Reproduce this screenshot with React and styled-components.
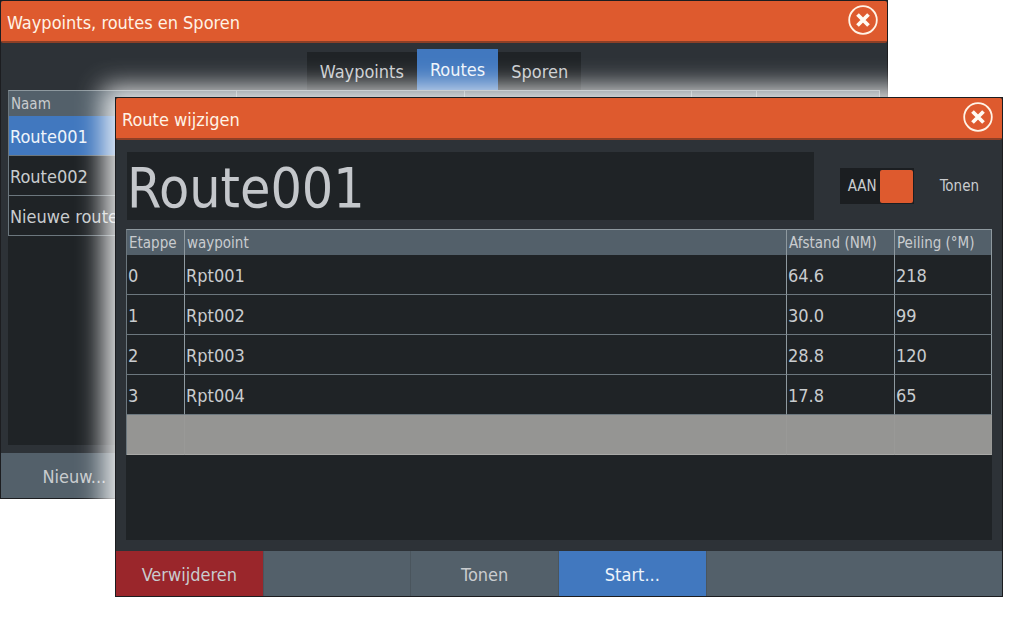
import { useState } from "react";
import styled, { createGlobalStyle } from "styled-components";

const GlobalStyle = createGlobalStyle`
  * {
    box-sizing: border-box;
  }
  body {
    margin: 0;
    background: #ffffff;
  }
  body, button, input, table {
    font-family: "DejaVu Sans Condensed", "DejaVu Sans", Tahoma, sans-serif;
  }
`;

const Desktop = styled.main`
  position: relative;
  min-height: 100vh;
  overflow: hidden;
`;

const Window = styled.section`
  position: absolute;
  display: flex;
  flex-direction: column;
  border: 1px solid #1c1d20;
  background: #2d3237;
  color: #c9cccf;
`;

const BackWindow = styled(Window)`
  top: 0;
  left: 0;
  right: 136px;
`;

const FrontWindow = styled(Window)`
  top: 97px;
  left: 115px;
  right: 21px;
  box-shadow: -2px 0 24px 10px rgba(255, 255, 255, 0.85);
`;

const TitleBar = styled.header`
  display: flex;
  align-items: center;
  justify-content: space-between;
  height: 42px;
  padding: 0 9px 2px 6px;
  border-bottom: 2px solid #8d3f26;
  border-radius: 2px;
  background: #de5a2e;
`;

const Title = styled.h1`
  margin: 0;
  padding-top: 5px;
  font-size: 18px;
  line-height: 24px;
  font-weight: 400;
  color: #fff3e6;
`;

const CloseButton = styled.button`
  display: flex;
  padding: 0;
  border: none;
  background: none;
  cursor: pointer;
`;

const Tabs = styled.nav`
  display: flex;
  justify-content: center;
  align-items: flex-end;
  height: 47px;
`;

const Tab = styled.button`
  height: ${({ $active }) => ($active ? 41 : 38)}px;
  padding: 0 13px;
  border: none;
  background: ${({ $active }) => ($active ? "#4178bf" : "#1f2326")};
  color: ${({ $active }) => ($active ? "#eef4fb" : "#c9cccf")};
  font-size: 18px;
  cursor: pointer;
`;

const Pane = styled.div`
  height: ${({ $height }) => $height}px;
  margin: 0 ${({ $side }) => $side}px;
  background: #1f2326;
`;

const Table = styled.table`
  width: 100%;
  table-layout: fixed;
  border-collapse: separate;
  border-spacing: 0;
  border-top: 1px solid #8e999f;
  border-left: 1px solid #6c777e;
  font-size: 18px;
  text-align: left;

  th {
    height: 25px;
    padding: 0 2px;
    border-right: 1px solid #8e999f;
    background: #53606a;
    font-size: 15px;
    font-weight: 400;
    white-space: nowrap;
  }

  td {
    height: 40px;
    padding: 1px 1px 0;
    border-right: 1px solid #8e999f;
    border-bottom: 1px solid #6c777e;
    white-space: nowrap;
  }
`;

const Row = styled.tr`
  background: ${({ $selected }) => ($selected ? "#4178bf" : "transparent")};
  color: ${({ $selected }) => ($selected ? "#eef4fb" : "inherit")};
`;

const EmptyRow = styled.tr`
  background: #959593;

  && td {
    border-right-color: #999997;
    border-bottom-color: #a9a9a7;
  }
`;

const Col = styled.col`
  width: ${({ $width }) => $width};
`;

const NameRow = styled.div`
  display: flex;
  align-items: center;
  gap: 26px;
  padding: 12px 23px 9px 11px;
`;

const NameInput = styled.input`
  flex: 1;
  min-width: 0;
  height: 68px;
  padding: 4px 0 0;
  border: none;
  outline: none;
  background: #1f2326;
  color: #c4c7cb;
  font-size: 55px;
`;

const Switch = styled.span`
  display: flex;
  align-items: center;
  gap: 3px;
  height: 36px;
  padding: 0 1px 0 8px;
  background: #1b1e21;
  font-size: 15px;
`;

const Knob = styled.input`
  appearance: none;
  width: 33px;
  height: 33px;
  margin: 0;
  border-radius: 2px;
  background: ${({ checked }) => (checked ? "#de5a2e" : "#53606a")};
  cursor: pointer;
`;

const SwitchLabel = styled.label`
  font-size: 15px;
`;

const ButtonBar = styled.footer`
  display: grid;
  grid-template-columns: repeat(6, 1fr);
  height: 45px;
  margin-top: ${({ $gap }) => $gap}px;
  background: #53606a;
`;

const colors = {
  danger: "#9a262b",
  primary: "#4178bf",
  plain: "#53606a",
};

const BarButton = styled.button`
  padding: 2px 0 0;
  border: none;
  border-right: 1px solid #4a555d;
  background: ${({ $kind }) => colors[$kind]};
  color: ${({ $kind }) => ($kind === "primary" ? "#eef4fb" : "#c9cccf")};
  font-size: 18px;
  cursor: pointer;
`;

const BarSlot = styled.span`
  border-right: 1px solid #4a555d;
`;

const Close = () => (
  <CloseButton aria-label="Sluiten">
    <svg width="30" height="30" viewBox="0 0 30 30" fill="none">
      <circle cx="15" cy="15" r="13.8" stroke="#fff3e6" strokeWidth="1.8" />
      <path d="M9.5 9.5 20.5 20.5M20.5 9.5 9.5 20.5" stroke="#fffaf2" strokeWidth="3.8" />
    </svg>
  </CloseButton>
);

const tabs = ["Waypoints", "Routes", "Sporen"];
const routes = ["Route001", "Route002", "Nieuwe route..."];
const legs = [
  { leg: 0, waypoint: "Rpt001", distance: "64.6", bearing: 218 },
  { leg: 1, waypoint: "Rpt002", distance: "30.0", bearing: 99 },
  { leg: 2, waypoint: "Rpt003", distance: "28.8", bearing: 120 },
  { leg: 3, waypoint: "Rpt004", distance: "17.8", bearing: 65 },
];

const RoutesWindow = () => {
  const [tab, setTab] = useState("Routes");

  return (
    <BackWindow>
      <TitleBar>
        <Title>Waypoints, routes en Sporen</Title>
        <Close />
      </TitleBar>
      <Tabs>
        {tabs.map((name) => (
          <Tab key={name} $active={name === tab} onClick={() => setTab(name)}>
            {name}
          </Tab>
        ))}
      </Tabs>
      <Pane $height={355} $side={7}>
        <Table>
          <colgroup>
            <Col $width="228px" />
            <Col $width="228px" />
            <Col $width="227px" />
            <Col $width="65px" />
            <Col $width="auto" />
          </colgroup>
          <thead>
            <tr>
              <th>Naam</th>
              <th />
              <th />
              <th />
              <th />
            </tr>
          </thead>
          <tbody>
            {routes.map((route, i) => (
              <Row key={route} $selected={i === 0}>
                <td>{route}</td>
                <td />
                <td />
                <td />
                <td />
              </Row>
            ))}
          </tbody>
        </Table>
      </Pane>
      <ButtonBar $gap={8}>
        <BarButton $kind="plain">Nieuw...</BarButton>
      </ButtonBar>
    </BackWindow>
  );
};

const EditRouteWindow = () => {
  const [name, setName] = useState("Route001");
  const [visible, setVisible] = useState(true);

  return (
    <FrontWindow>
      <TitleBar>
        <Title>Route wijzigen</Title>
        <Close />
      </TitleBar>
      <NameRow>
        <NameInput aria-label="Naam" value={name} onChange={(e) => setName(e.target.value)} />
        <Switch>
          {visible ? "AAN" : "UIT"}
          <Knob
            id="visible"
            type="checkbox"
            checked={visible}
            onChange={(e) => setVisible(e.target.checked)}
          />
        </Switch>
        <SwitchLabel htmlFor="visible">Tonen</SwitchLabel>
      </NameRow>
      <Pane $height={311} $side={10}>
        <Table>
          <colgroup>
            <Col $width="58px" />
            <Col $width="auto" />
            <Col $width="108px" />
            <Col $width="97px" />
          </colgroup>
          <thead>
            <tr>
              <th>Etappe</th>
              <th>waypoint</th>
              <th>Afstand (NM)</th>
              <th>Peiling (°M)</th>
            </tr>
          </thead>
          <tbody>
            {legs.map((item) => (
              <Row key={item.leg}>
                <td>{item.leg}</td>
                <td>{item.waypoint}</td>
                <td>{item.distance}</td>
                <td>{item.bearing}</td>
              </Row>
            ))}
            <EmptyRow>
              <td />
              <td />
              <td />
              <td />
            </EmptyRow>
          </tbody>
        </Table>
      </Pane>
      <ButtonBar $gap={11}>
        <BarButton $kind="danger">Verwijderen</BarButton>
        <BarSlot />
        <BarButton $kind="plain">Tonen</BarButton>
        <BarButton $kind="primary">Start...</BarButton>
      </ButtonBar>
    </FrontWindow>
  );
};

const App = () => (
  <>
    <GlobalStyle />
    <Desktop>
      <RoutesWindow />
      <EditRouteWindow />
    </Desktop>
  </>
);

export default App;
